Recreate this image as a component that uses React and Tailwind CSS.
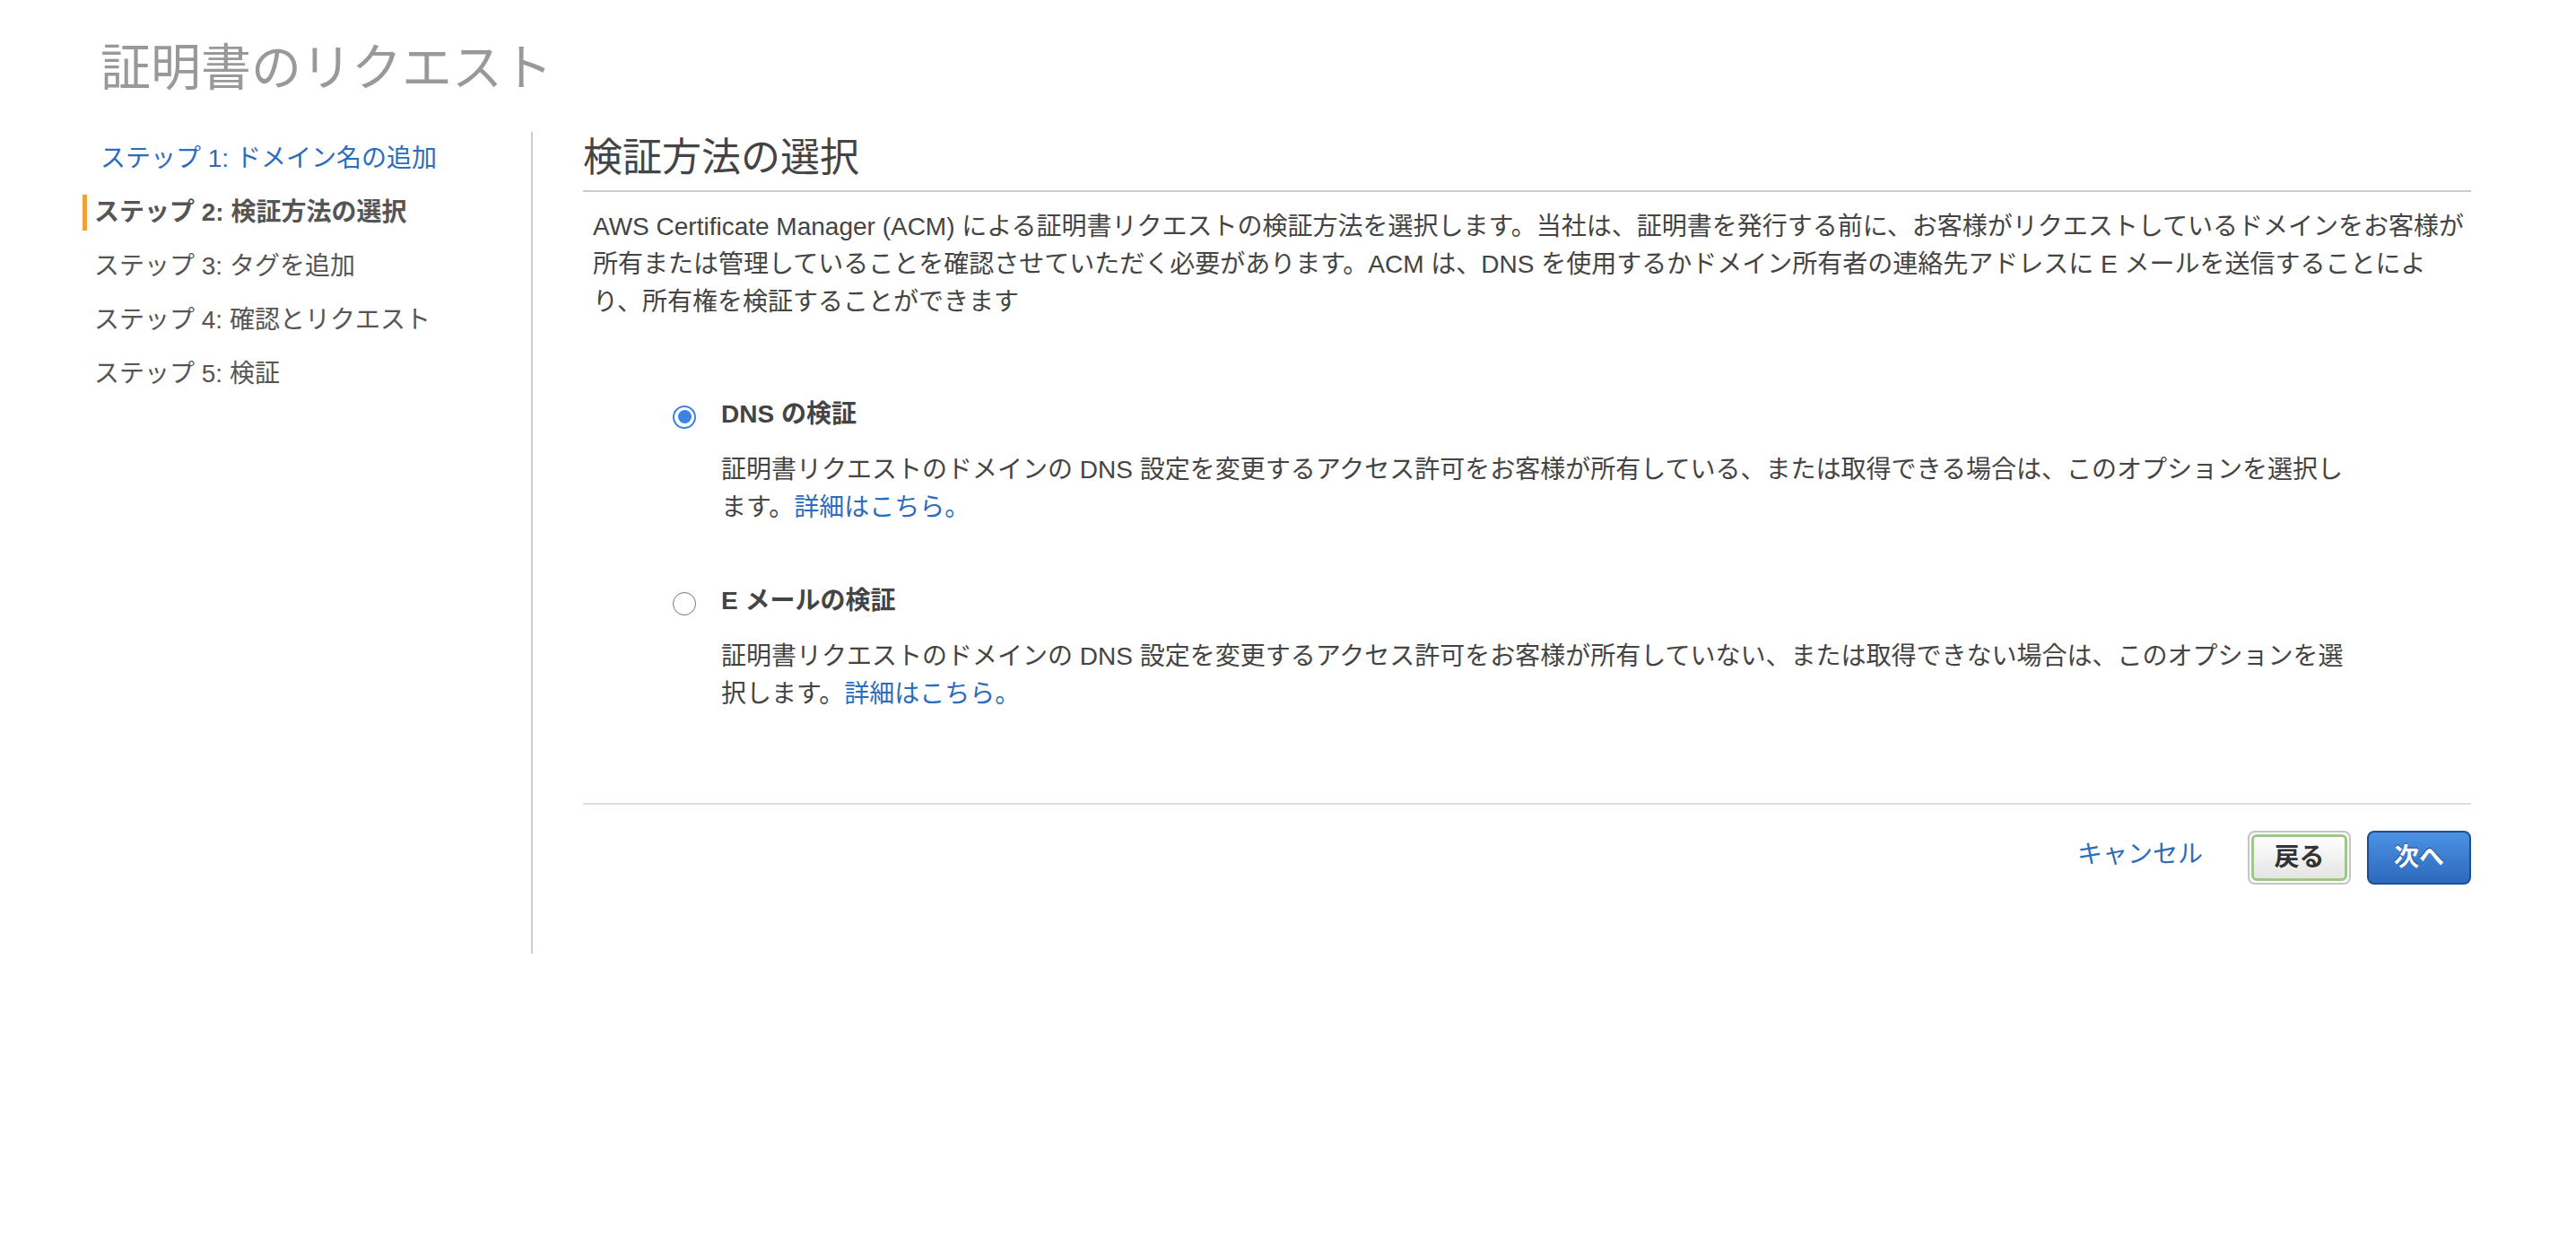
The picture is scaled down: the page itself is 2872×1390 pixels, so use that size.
import React from 'react';

const steps = [
  { label: 'ステップ 1: ドメイン名の追加', state: 'done' },
  { label: 'ステップ 2: 検証方法の選択', state: 'active' },
  { label: 'ステップ 3: タグを追加', state: 'todo' },
  { label: 'ステップ 4: 確認とリクエスト', state: 'todo' },
  { label: 'ステップ 5: 検証', state: 'todo' },
];

function Radio({ checked }) {
  if (checked) {
    return (
      <span className="flex h-[26px] w-[26px] items-center justify-center rounded-full border-[2.5px] border-[#3b82e8] bg-white">
        <span className="h-[15px] w-[15px] rounded-full bg-[#3b82e8]" />
      </span>
    );
  }
  return <span className="block h-[26px] w-[26px] rounded-full border-[1.5px] border-[#767676] bg-white" />;
}

function Option({ checked, title, lines, gap }) {
  return (
    <div className={gap}>
      <div className="flex h-[42px] items-center">
        <div className="mt-[5px] flex w-[54px] items-center">
          <Radio checked={checked} />
        </div>
        <span className="text-[28px] font-bold text-[#444]">{title}</span>
      </div>
      <p className="mt-[20px] pl-[54px] text-[28px] leading-[42px] text-[#444]">
        {lines[0]}
        <br />
        {lines[1]}
        <a href="#" className="text-[#2b6cbc]">
          詳細はこちら。
        </a>
      </p>
    </div>
  );
}

function Sidebar() {
  return (
    <div className="w-[594px] shrink-0 border-r-2 border-[#cccccc] pl-[92px]">
      {steps.map((s) => (
        <div key={s.label} className="flex h-[60px] items-center">
          <div
            className={`flex h-[40px] items-center border-l-[5px] text-[28px] ${
              s.state === 'active'
                ? 'border-[#f0a03c] pl-[8px] font-bold text-[#555]'
                : s.state === 'done'
                ? 'border-transparent pl-[15px] text-[#2b6cbc]'
                : 'border-transparent pl-[8px] text-[#555]'
            }`}
          >
            {s.label}
          </div>
        </div>
      ))}
    </div>
  );
}

export default function App() {
  return (
    <div className="min-h-screen bg-white font-['Liberation_Sans','Noto_Sans_CJK_JP',sans-serif]">
      <h1 className="pl-[112px] pt-[44px] text-[56px] font-normal leading-[64px] text-[#999]">
        証明書のリクエスト
      </h1>

      <div className="mt-[39px] flex">
        <Sidebar />

        <div className="flex-1 pb-[77px] pl-[56px] pr-[117px]">
          <h2 className="border-b-2 border-[#cccccc] pb-[7px] text-[44px] font-normal leading-[58px] text-[#444]">
            検証方法の選択
          </h2>

          <p className="mt-[18px] pl-[11px] text-[28px] leading-[42px] text-[#444]">
            AWS Certificate Manager (ACM) による証明書リクエストの検証方法を選択します。当社は、証明書を発行する前に、お客様がリクエストしているドメインをお客様が
            <br />
            所有または管理していることを確認させていただく必要があります。ACM は、DNS を使用するかドメイン所有者の連絡先アドレスに E メールを送信することによ
            <br />
            り、所有権を検証することができます
          </p>

          <div className="ml-[100px]">
            <Option
              checked
              gap="mt-[83px]"
              title="DNS の検証"
              lines={[
                '証明書リクエストのドメインの DNS 設定を変更するアクセス許可をお客様が所有している、または取得できる場合は、このオプションを選択し',
                'ます。',
              ]}
            />
            <Option
              gap="mt-[62px]"
              title="E メールの検証"
              lines={[
                '証明書リクエストのドメインの DNS 設定を変更するアクセス許可をお客様が所有していない、または取得できない場合は、このオプションを選',
                '択します。',
              ]}
            />
          </div>

          <div className="mt-[100px] border-t-2 border-[#dddddd] pt-[29px]">
            <div className="flex items-center justify-end">
              <a href="#" className="mb-[6px] mr-[50px] text-[28px] text-[#2b6cbc]">
                キャンセル
              </a>
              <div className="mr-[18px] rounded-[8px] border-2 border-[#c4c4c4] bg-white p-[2px]">
                <button className="flex h-[52px] w-[107px] items-center justify-center rounded-[6px] border-[3px] border-[#9cc98a] bg-gradient-to-b from-white to-[#e4e4e4] text-[28px] font-bold text-[#333] [text-shadow:0_1px_0_#ffffff]">
                  戻る
                </button>
              </div>
              <button className="flex h-[60px] w-[116px] items-center justify-center rounded-[8px] border-2 border-[#1f4f91] bg-gradient-to-b from-[#4c92e4] to-[#2d69bd] text-[28px] font-bold text-white [text-shadow:0_-1px_1px_#183c70]">
                次へ
              </button>
            </div>
          </div>
        </div>
      </div>
    </div>
  );
}
